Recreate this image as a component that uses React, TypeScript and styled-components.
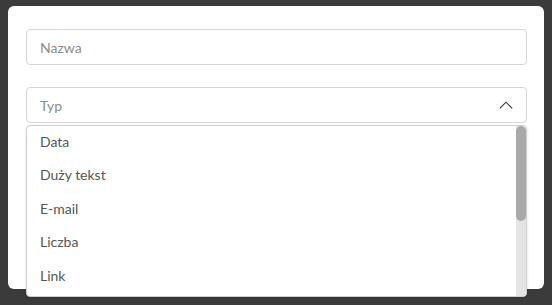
import React from "react";
import styled, { createGlobalStyle } from "styled-components";

const Global = createGlobalStyle`
  html, body { margin: 0; padding: 0; background: #3b3b3b; }
  body { font-family: Lato, "Noto Sans", sans-serif; }
  * { box-sizing: border-box; }
`;

const Page = styled.div`
  padding: 6px 8px 0 8px;
  width: 552px;
  height: 305px;
  overflow: hidden;
`;

const Panel = styled.div`
  background: #ffffff;
  border-radius: 6px;
  height: 283px;
  padding: 23px 17px 0 18px;
  display: flex;
  flex-direction: column;
  gap: 22px;
`;

const Field = styled.div`
  position: relative;
  height: 36px;
  border: 1px solid #d6d6d6;
  border-radius: 4px;
  display: flex;
  align-items: center;
  padding: 0 13px;
  font-size: 14px;
  color: #8c8c8c;
`;

const Placeholder = styled.span`
  flex: 1;
`;

const Chevron = styled.svg`
  width: 14px;
  height: 8px;
`;

const Menu = styled.div`
  position: absolute;
  left: -1px;
  right: -1px;
  top: 37px;
  height: 172px;
  background: #ffffff;
  border: 1px solid #cfcfcf;
  border-radius: 4px;
  box-shadow: 0 1px 3px rgba(0, 0, 0, 0.12);
  overflow: hidden;
  display: flex;
`;

const List = styled.div`
  flex: 1;
  padding-top: 0;
`;

const Item = styled.div`
  padding: 6.5px 13px 9.5px 13px;
  font-size: 14px;
  line-height: 17.5px;
  color: #555555;
  white-space: nowrap;
`;

const Track = styled.div`
  width: 10px;
  background: #e4e4e4;
  display: flex;
  flex-direction: column;
`;

const Thumb = styled.div<{ $size: number }>`
  height: ${(p) => p.$size}px;
  background: #a9a9a9;
  border-radius: 5px;
`;

const items = ["Data", "Duży tekst", "E-mail", "Liczba", "Link"];

export default function App() {
  return (
    <>
      <Global />
      <Page>
        <Panel>
          <Field>
            <Placeholder>Nazwa</Placeholder>
          </Field>
          <Field>
            <Placeholder>Typ</Placeholder>
            <Chevron viewBox="0 0 14 8">
              <path d="M0.8 7.4 L7 1.2 L13.2 7.4" fill="none" stroke="#333" strokeWidth="1.1" />
            </Chevron>
            <Menu>
              <List>
                {items.map((t) => (
                  <Item key={t}>{t}</Item>
                ))}
              </List>
              <Track>
                <Thumb $size={95} />
              </Track>
            </Menu>
          </Field>
        </Panel>
      </Page>
    </>
  );
}
